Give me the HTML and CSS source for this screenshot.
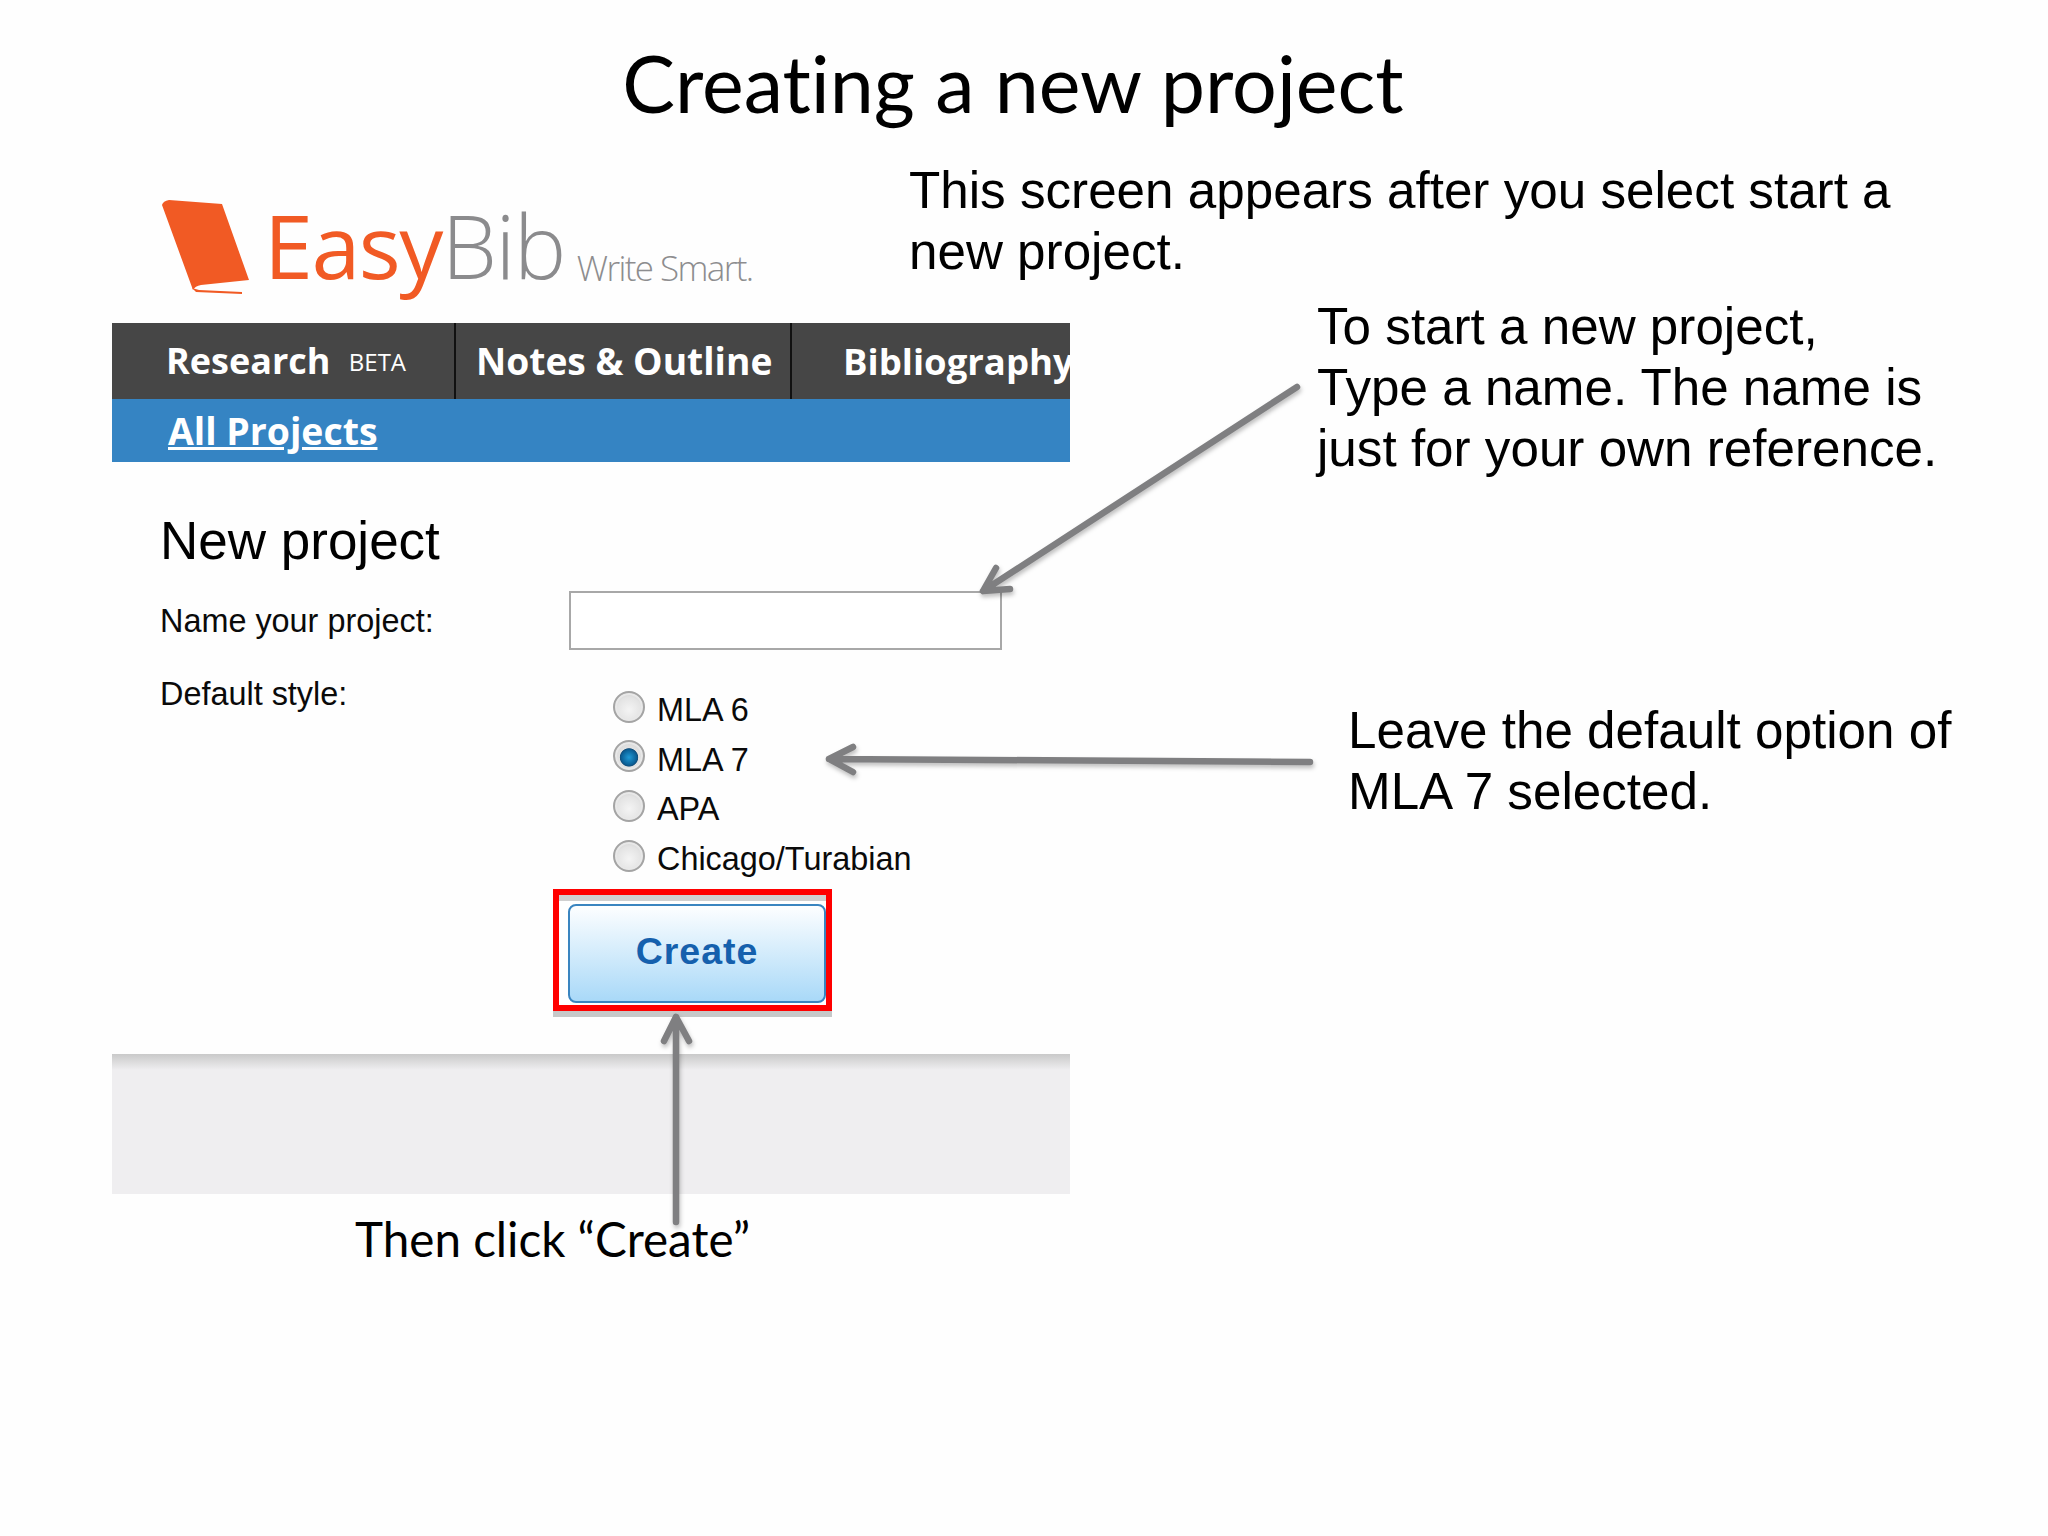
FILE: index.html
```html
<!DOCTYPE html>
<html lang="en">
<head>
<meta charset="utf-8">
<title>Creating a new project</title>
<link rel="stylesheet" href="styles.css">
</head>
<body>
<main class="slide">
  <h1 class="title">Creating a new project</h1>

  <section class="app">
    <div class="brand">
      <svg class="book" viewBox="0 0 90 96" aria-hidden="true">
        <path class="book-cover" d="M1 5 Q2 1 8 0 L61 4 L88 80 L40 85 Q34 86 32 90 Z"/>
        <path class="book-cover" d="M31 88 L35 92 L81 94 L81 92 L38 90 Z"/>
      </svg>
      <span class="brand-easy">Easy</span><span class="brand-bib">Bib</span>
      <span class="brand-tag">Write Smart.</span>
    </div>

    <nav class="nav">
      <a class="nav-item nav-research">Research <small class="beta">BETA</small></a>
      <a class="nav-item nav-notes">Notes &amp; Outline</a>
      <a class="nav-item nav-biblio">Bibliography</a>
    </nav>
    <div class="subnav"><a class="subnav-link">All Projects</a></div>

    <form class="content">
      <h2 class="heading">New project</h2>
      <div class="row row-name">
        <label class="label">Name your project:</label>
        <input class="name-input" type="text">
      </div>
      <div class="row row-style">
        <span class="label">Default style:</span>
        <div class="radios">
          <label class="radio"><input type="radio" name="style"><span>MLA 6</span></label>
          <label class="radio"><input type="radio" name="style" checked><span>MLA 7</span></label>
          <label class="radio"><input type="radio" name="style"><span>APA</span></label>
          <label class="radio"><input type="radio" name="style"><span>Chicago/Turabian</span></label>
        </div>
      </div>
      <div class="highlight"><button class="create" type="button">Create</button></div>
    </form>

    <div class="footer-band"></div>
  </section>

  <p class="note note-intro">This screen appears after you select start a<br>new project.</p>
  <p class="note note-name">To start a new project,<br>Type a name. The name is<br>just for your own reference.</p>
  <p class="note note-default">Leave the default option of<br>MLA 7 selected.</p>
  <p class="caption">Then click “Create”</p>

  <svg class="arrows" viewBox="0 0 2048 1536" aria-hidden="true">
    <path d="M1297 387 L983 591 M996 568 L983 591 L1010 589"/>
    <path d="M1310 762 L829 759 M853 747 L829 759 L853 772"/>
    <path d="M676 1222 L676 1017 M664 1041 L676 1017 L689 1041"/>
  </svg>
</main>
</body>
</html>
```
FILE: styles.css
```css
* { box-sizing: border-box; }
html, body { margin: 0; padding: 0; background: #fefefe; }
body { font-family: "Liberation Sans", Arial, sans-serif; color: #000; }

.slide { position: relative; width: 2048px; height: 1536px; overflow: hidden; }

.title {
  margin: 0;
  height: 170px;
  padding: 33px 22px 0 0;
  text-align: center;
  font: 400 79px/100px Lato, "Open Sans", sans-serif;
  font-variant-ligatures: none;
  color: #000;
}

.app { margin-left: 112px; width: 958px; }

.brand { height: 153px; padding: 30px 0 0 49px; display: flex; align-items: baseline; white-space: nowrap; font-family: "Open Sans", sans-serif; }
.book { width: 90px; height: 96px; margin-right: 13px; align-self: flex-start; }
.book-cover { fill: #f15a24; }
.brand-easy { font-size: 88px; line-height: 90px; color: #f15a24; font-weight: 400; letter-spacing: -1.5px; }
.brand-bib { font-size: 88px; line-height: 90px; color: #8b8b8d; font-weight: 300; letter-spacing: -1.5px; }
.brand-tag { position: relative; top: 2px; margin-left: 12px; font-size: 35px; color: #8d8d8f; font-weight: 300; letter-spacing: -1.6px; }

.nav { height: 76px; background: #464646; display: flex; overflow: hidden; font-family: "Open Sans", sans-serif; font-weight: 700; font-size: 36px; color: #fff; white-space: nowrap; }
.nav-item { display: block; flex: none; line-height: 76px; color: #fff; }
.nav-research { width: 344px; padding-left: 54px; border-right: 2px solid #111; }
.nav-notes { width: 336px; padding-left: 20px; border-right: 2px solid #111; font-size: 37.2px; }
.nav-biblio { padding-left: 51px; font-size: 36.5px; }
.beta { margin-left: 9px; font-size: 24px; font-weight: 400; vertical-align: 3px; }

.subnav { height: 63px; background: #3584c3; padding-left: 56px; font-family: "Open Sans", sans-serif; font-weight: 700; font-size: 37.4px; line-height: 63px; }
.subnav-link { color: #fff; text-decoration: underline; }

.content { height: 592px; padding: 49px 0 0 48px; }
.heading { margin: 0; font-size: 53px; line-height: 60px; font-weight: 400; color: #000; }
.label { width: 409px; flex: none; font-size: 32.4px; line-height: 40px; color: #0a0a0a; }

.row { display: flex; }
.row-name { margin-top: 20px; align-items: center; height: 59px; }
.name-input { width: 433px; height: 59px; border: 2px solid #a8a8a8; background: #fff; padding: 0; outline: 0; }

.row-style { margin-top: 24px; }
.radios { display: flex; flex-direction: column; margin: 8px 0 0 44px; }
.radio { display: flex; align-items: center; gap: 12px; height: 49.6px; font-size: 32.4px; color: #0a0a0a; }
.radio span { position: relative; top: 4px; }
.radio input {
  appearance: none;
  margin: 0;
  width: 32px;
  height: 32px;
  border-radius: 50%;
  border: 2px solid #a4a4a4;
  background: radial-gradient(circle at 50% 60%, #f4f4f4 0, #e4e4e4 55%, #c8c8c8 100%);
  box-shadow: inset 0 0 0 2px #e8e8e8;
}
.radio input:checked {
  background: radial-gradient(circle at 50% 55%, #1f9ad6 0, #0a5f96 36%, #124f7c 42%, #e2e2e2 46%, #cfcfcf 100%);
}

.highlight {
  margin: 9px 0 0 393px;
  width: 279px;
  height: 122px;
  padding: 9px 0 0 9px;
  border: 6px solid #f00;
  box-shadow: 0 6px 0 #c6c8c8, inset 0 6px 0 #d0d0d0;
  background: #fff;
}
.create {
  display: block;
  width: 258px;
  height: 99px;
  border: 2px solid #3a85c0;
  border-radius: 8px;
  background: linear-gradient(#fdfeff, #a9d9f8);
  font: 700 37.5px/1 "Liberation Sans", sans-serif;
  letter-spacing: 1px;
  color: #1560ad;
  padding: 0 0 4px;
}

.footer-band { height: 140px; background: linear-gradient(#c9c9c9 0, #efeef0 16px, #efeef0 100%); }

.note { position: absolute; margin: 0; font-size: 51.2px; line-height: 61px; color: #000; white-space: nowrap; }
.note-intro { left: 909px; top: 160px; }
.note-name { left: 1317px; top: 296px; }
.note-default { left: 1348px; top: 700px; }
.caption { position: absolute; margin: 0; left: 355px; top: 1209px; font: 400 47.6px/60px Lato, "Open Sans", sans-serif; font-variant-ligatures: none; color: #000; white-space: nowrap; }

.arrows { position: absolute; left: 0; top: 0; width: 2048px; height: 1536px; pointer-events: none; filter: drop-shadow(1px 3px 2px rgba(0,0,0,.25)); }
.arrows path { fill: none; stroke: #7f7f81; stroke-width: 6.5; stroke-linecap: round; stroke-linejoin: round; }
```
